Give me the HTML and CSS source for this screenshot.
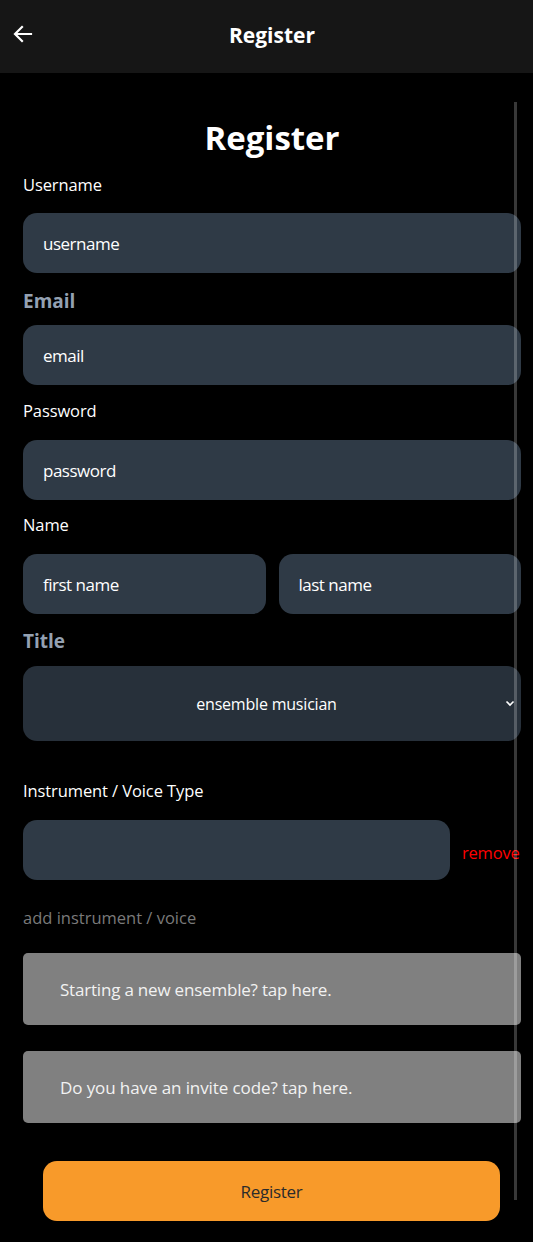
FILE: index.html
```html
<!DOCTYPE html>
<html>
<head>
<meta charset="utf-8">
<link rel="stylesheet" href="styles.css">
</head>
<body>
<header class="topbar">
  <svg class="back" width="24" height="24" viewBox="0 0 24 24"><path d="M20 12H4.5M11 5l-7 7 7 7" fill="none" stroke="#fff" stroke-width="2.2" stroke-linecap="square"/></svg>
  <div class="topbar-title">Register</div>
</header>
<main class="page">
  <div class="scrollbar"></div>
  <h1 class="heading">Register</h1>
  <label class="label l-user">Username</label>
  <div class="field">username</div>
  <div class="label-bold l-email">Email</div>
  <div class="field">email</div>
  <label class="label l-pass">Password</label>
  <div class="field">password</div>
  <label class="label l-name">Name</label>
  <div class="name-row">
    <div class="field">first name</div>
    <div class="field">last name</div>
  </div>
  <div class="label-bold l-title">Title</div>
  <div class="select">
    <span>ensemble musician</span>
    <svg class="chev" width="10" height="8" viewBox="0 0 10 8"><path d="M1.5 2.5l3.5 3.5 3.5-3.5" fill="none" stroke="#fff" stroke-width="1.6"/></svg>
  </div>
  <label class="label l-inst">Instrument / Voice Type</label>
  <div class="inst-row">
    <div class="field inst"></div>
    <span class="remove">remove</span>
  </div>
  <div class="add">add instrument / voice</div>
  <div class="tap tap1">Starting a new ensemble? tap here.</div>
  <div class="tap tap2">Do you have an invite code? tap here.</div>
  <div class="btn">Register</div>
</main>
</body>
</html>
```
FILE: styles.css
```css
* { box-sizing: border-box; }
html, body { margin: 0; padding: 0; background: #000; }
body {
  font-family: "Open Sans", "Noto Sans", sans-serif;
  color: #fff;
  width: 533px;
  height: 1242px;
  overflow: hidden;
}
.topbar {
  height: 73px;
  background: #161616;
  display: flex;
  align-items: center;
  justify-content: center;
  position: relative;
}
.back { position: absolute; left: 11px; top: 22px; }
.topbar-title {
  font-size: 21px;
  font-weight: 700;
  letter-spacing: 0;
  margin-top: -4px;
  margin-left: 11px;
}
.page {
  position: relative;
  padding: 0 12px 0 23px;
}
.scrollbar {
  position: absolute;
  left: 514px;
  top: 29px;
  width: 3px;
  height: 1098px;
  background: rgba(255,255,255,0.22);
  z-index: 5;
}
.heading {
  margin: 0;
  padding-top: 45px;
  height: 100px;
  line-height: 40px;
  font-size: 33px;
  font-weight: 700;
  text-align: center;
  letter-spacing: 0;
}
.label, .label-bold {
  display: block;
  font-size: 16.5px;
  line-height: 24px;
  height: 24px;
  letter-spacing: -0.1px;
}
.label-bold { font-weight: 700; color: #94a1b2; font-size: 19px; letter-spacing: 0; }
.l-user { margin-top: 0; margin-bottom: 16px; }
.l-email { margin-top: 16px; margin-bottom: 12px; }
.l-pass { margin-top: 14px; margin-bottom: 17px; }
.l-name { margin-top: 13px; margin-bottom: 17px; }
.l-title { margin-top: 15px; margin-bottom: 13px; }
.l-inst { margin-top: 38px; margin-bottom: 17px; }
.field {
  height: 60px;
  background: #2f3a46;
  border-radius: 14px;
  padding-left: 20px;
  display: flex;
  align-items: center;
  font-size: 17px;
  letter-spacing: -0.5px;
  color: #fff;
}
.name-row {
  display: grid;
  grid-template-columns: 1fr 1fr;
  gap: 13px;
}
.select {
  margin-top: 0;
  height: 75px;
  background: #27303a;
  border-radius: 14px;
  display: flex;
  align-items: center;
  justify-content: center;
  position: relative;
  font-size: 16px;
  letter-spacing: -0.2px;
}
.select span { margin-left: -11px; }
.chev { position: absolute; right: 6px; top: 33px; }
.inst-row {
  display: flex;
  align-items: center;
  gap: 12px;
}
.inst { width: 427px; flex: none; }
.remove {
  color: #ff0000;
  font-size: 16.5px;
  letter-spacing: -0.2px;
  margin-top: 4px;
}
.add {
  margin-top: 26px;
  height: 24px;
  line-height: 24px;
  font-size: 16.5px;
  color: #7a7a7a;
  letter-spacing: 0;
}
.tap {
  height: 72px;
  background: #808080;
  border-radius: 5px;
  display: flex;
  align-items: center;
  padding-left: 37px;
  font-size: 17px;
  letter-spacing: -0.2px;
  color: #f2f2f2;
}
.tap1 { margin-top: 23px; }
.tap2 { margin-top: 26px; letter-spacing: -0.1px; }
.btn {
  margin: 38px 21px 0 20px;
  height: 60px;
  background: #f89a2a;
  border-radius: 14px;
  display: flex;
  align-items: center;
  justify-content: center;
  color: #2b2b2b;
  font-size: 17px;
  letter-spacing: -0.3px;
}
```
